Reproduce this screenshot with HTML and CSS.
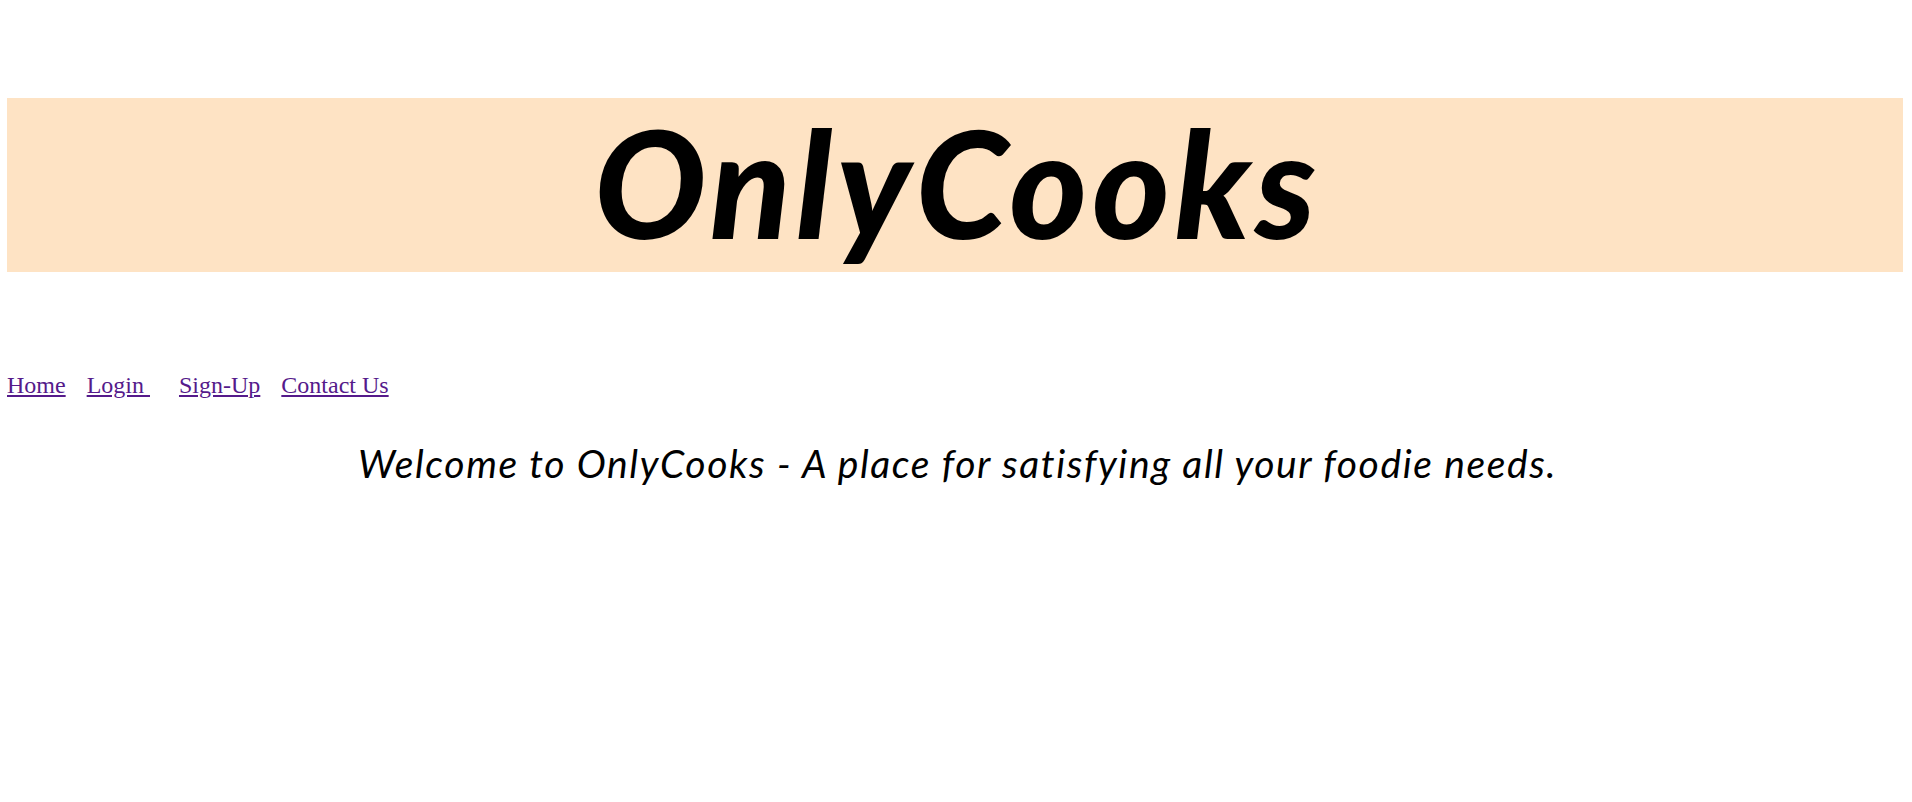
FILE: index.html
```html
<!DOCTYPE html>
<html lang="en">
<head>
<meta charset="utf-8">
<title>OnlyCooks</title>
<link rel="stylesheet" href="styles.css">
</head>
<body>
  <header class="banner">
    <h1 class="brand">OnlyCooks</h1>
  </header>
  <nav class="nav">
    <a class="nav-link" href="#">Home</a>
    <a class="nav-link nav-link-wide" href="#">Login&nbsp;</a>
    <a class="nav-link" href="#">Sign-Up</a>
    <a class="nav-link" href="#">Contact Us</a>
  </nav>
  <h2 class="welcome">Welcome to OnlyCooks - A place for satisfying all your foodie needs.</h2>
</body>
</html>
```
FILE: styles.css
```css
html, body {
  background: #ffffff;
}

body {
  margin: 8px 9px 8px 7px;
  font-family: "Liberation Serif", "Times New Roman", serif;
}

.banner {
  display: flow-root;
  margin-top: 90px;
  height: 174px;
  background: #fee3c4;
}

.brand {
  margin: -5px 0 0;
  padding-left: 5px;
  line-height: 178px;
  text-align: center;
  font-family: "Lato", "Open Sans", sans-serif;
  font-weight: 900;
  font-style: italic;
  font-size: 148px;
  letter-spacing: 5px;
  color: #000000;
}

.nav {
  display: flex;
  gap: 21px;
  margin-top: 99px;
  line-height: 28px;
  font-size: 24px;
}

.nav-link {
  color: #551a8b;
  text-decoration: underline;
}

.nav-link-wide {
  margin-right: 8px;
}

.welcome {
  margin: 40px 0 0;
  padding-left: 5px;
  line-height: 48px;
  text-align: center;
  font-family: "Lato", "Open Sans", sans-serif;
  font-weight: 400;
  font-style: italic;
  font-size: 39px;
  letter-spacing: 1.6px;
  color: #000000;
}
```
